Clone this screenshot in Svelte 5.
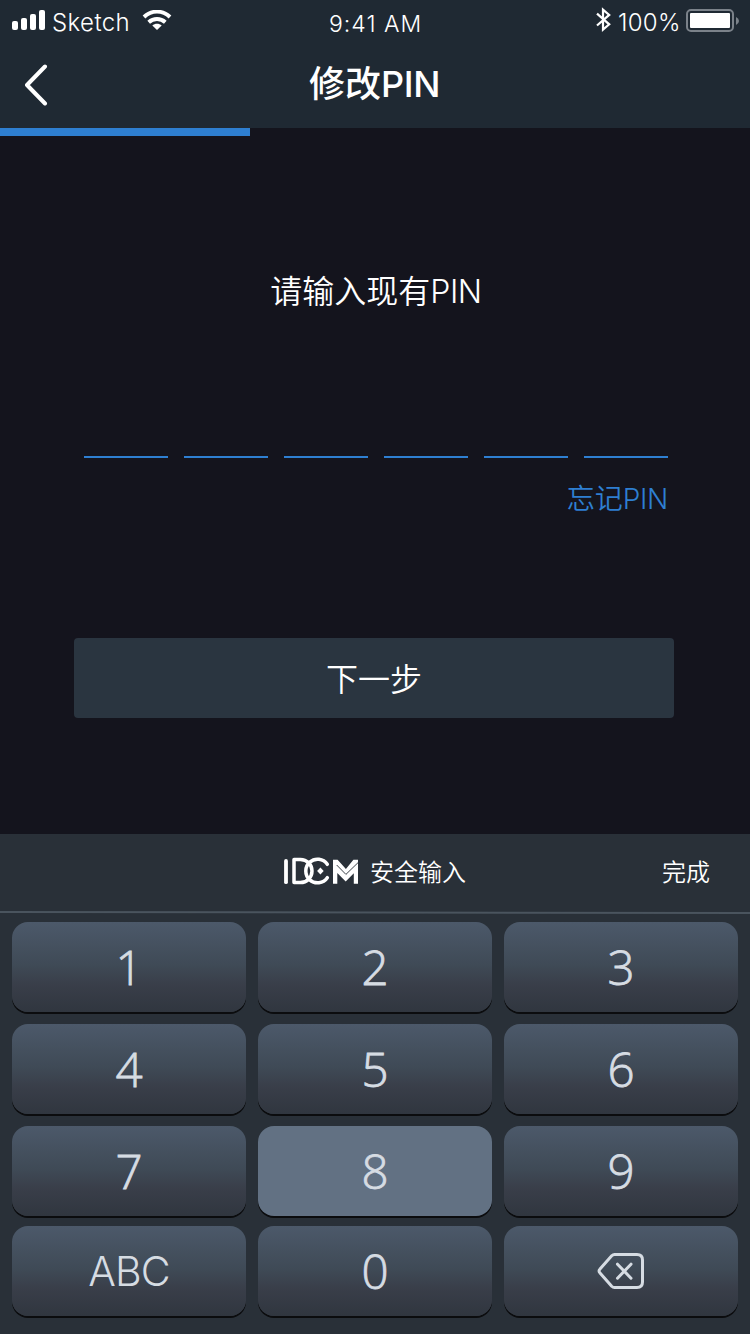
<script>
  const slots = [0, 1, 2, 3, 4, 5];
  const keys = ['1', '2', '3', '4', '5', '6', '7', '8', '9', 'ABC', '0', 'delete'];
</script>

<main class="screen">
  <header>
    <div class="status">
      <svg class="signal" width="34" height="22" viewBox="0 0 34 22" fill="#fff">
        <rect x="0" y="11" width="6" height="9" rx="2" />
        <rect x="9" y="8" width="6" height="12" rx="2" />
        <rect x="18" y="4" width="6" height="16" rx="2" />
        <rect x="27" y="0" width="6" height="20" rx="2" />
      </svg>
      <span class="carrier">Sketch</span>
      <svg class="wifi" width="30" height="22" viewBox="0 0 30 22">
        <g fill="none" stroke="#fff">
          <path d="M2 7C9.500-.2 20.500-.2 28 7" stroke-width="3.900" />
          <path d="M6.700 12.200c4.700-4.300 11.900-4.300 16.600 0" stroke-width="3.900" />
        </g>
        <path d="M15 20l-4.700-4.600c2.600-2.300 6.800-2.300 9.400 0z" fill="#fff" />
      </svg>
      <span class="time">9:41 AM</span>
      <svg class="bluetooth" width="16" height="26" viewBox="0 0 16 26" fill="none" stroke="#fff" stroke-width="2.200">
        <path d="M1 6.700l12.200 10.600-6.200 5.300V2.600l6.200 5.300L1 18.500" />
      </svg>
      <span class="percent">100%</span>
      <svg class="battery" width="54" height="24" viewBox="0 0 54 24">
        <rect x="1" y="1" width="46" height="21" rx="4" fill="none" stroke="#7b828a" stroke-width="2" />
        <rect x="4" y="4" width="40" height="15" rx="1" fill="#fff" />
        <path d="M50 8v8q3-1.500 3-4t-3-4z" fill="#7b828a" />
      </svg>
    </div>
    <nav>
      <svg class="back" width="24" height="42" viewBox="0 0 24 42" fill="none" stroke="#fff" stroke-width="4" stroke-linecap="round" stroke-linejoin="round">
        <path d="M21 2.500L3 21l18 18.500" />
      </svg>
      <h1>修改<span>PIN</span></h1>
    </nav>
  </header>
  <div class="progress"></div>
  <section class="form">
    <p class="prompt">请输入现有<span>PIN</span></p>
    <div class="slots">
      {#each slots as slot (slot)}<i></i>{/each}
    </div>
    <div class="forgot">忘记<span>PIN</span></div>
    <button class="next">下一步</button>
  </section>
  <section class="keyboard">
    <div class="toolbar">
      <svg class="logo" width="76" height="30" viewBox="0 0 76 30">
        <g fill="none" stroke="#fff" stroke-width="3.500">
          <path d="M3 4.900v21.300" stroke-width="3.800" stroke-linecap="round" />
          <path d="M11 3.400h6.400c6.500 0 11.600 5.200 11.600 11.600s-5.100 11.600-11.600 11.600H11z" stroke-linejoin="round" />
          <path d="M44.300 8.300a11.800 11.800 0 1 0 0 13.400" stroke-linecap="round" />
        </g>
        <path d="M37.400 11.500l3.300 3.500-3.300 3.500-3.300-3.500z" fill="#fff" />
        <path d="M50 3.700h4.600l8.300 9.200 7.500-9.200H75v24h-4.200V17.200l-8.100 8.300-8.400-8.500v10.700H50z" fill="#fff" />
        <path d="M53.700 9l9.200 9.400L75.500 6.200" fill="none" stroke="#293038" stroke-width=".9" />
      </svg>
      <span class="safe">安全输入</span>
      <span class="done">完成</span>
    </div>
    <svg class="divider" width="750" height="4" viewBox="0 0 750 4"><path d="M0 1l750 1" stroke="#4a545e" stroke-width="2" /></svg>
    <div class="keys">
      {#each keys as key (key)}
        <button class="key" class:pressed={key === '8'} class:letters={key === 'ABC'}>
          {#if key === 'delete'}
            <svg width="48" height="38" viewBox="0 0 48 38" fill="none" stroke="#d6dce3" stroke-width="3" stroke-linecap="round" stroke-linejoin="round">
              <path d="M17.500 2.500H40q5.500 0 5.500 5.500v22q0 5.500-5.500 5.500H17.500q-1.500 0-2.800-1.300L3 21q-2-2 0-4L14.700 3.800q1.300-1.300 2.800-1.300z" />
              <path d="M20.500 12.200l13.500 14M34 12.200l-13.500 14" />
            </svg>
          {:else}<span>{key}</span>{/if}
        </button>
      {/each}
    </div>
  </section>
</main>

<style>
  :global(body) { margin: 0; background: #14141d; }
  * { box-sizing: border-box; }
  .screen { width: 750px; height: 1334px; display: flex; flex-direction: column; overflow: hidden; background: #14141d; color: #fff; font-family: Inter, "Noto Sans CJK SC", sans-serif; }
  header { height: 128px; background: #1f2933; flex: none; }
  .status { height: 44px; display: flex; align-items: flex-start; padding-left: 12px; font-size: 24px; font-weight: 350; line-height: 28px; white-space: nowrap; }
  .status svg { flex: none; }
  .signal { margin-top: 10px; }
  .carrier { width: 78px; margin: 9px 0 0 6px; letter-spacing: .4px; }
  .wifi { margin: 10px 0 0 12px; }
  .time { width: 94px; margin: 10px 0 0 157px; font-size: 23px; letter-spacing: 1px; }
  .bluetooth { margin: 7px 0 0 173px; }
  .percent { width: 62px; margin: 9px 0 0 6px; font-size: 24px; letter-spacing: .3px; }
  .battery { margin: 9px 0 0 6px; }
  nav { height: 84px; display: flex; align-items: flex-start; padding-left: 24px; }
  .back { flex: none; margin-top: 20px; }
  h1 { margin: 15px 0 0 261px; font-size: 36px; line-height: 50px; font-weight: 500; white-space: nowrap; }
  h1 span { font-weight: 450; letter-spacing: -.3px; }
  .progress { width: 250px; height: 8px; background: #2e7fd1; flex: none; }
  .form { height: 698px; flex: none; padding: 132px 76px 0 74px; display: flex; flex-direction: column; }
  .prompt { margin: 0; padding-left: 4px; height: 44px; line-height: 48px; font-size: 32px; font-weight: 350; text-align: center; }
  .prompt span { font-weight: 300; letter-spacing: -.5px; }
  .slots { display: flex; gap: 16px; padding-left: 10px; margin-top: 144px; }
  .slots i { width: 84px; height: 2px; background: #2e7fd1; }
  .forgot { align-self: flex-end; margin: 21px 6px 0 0; height: 40px; line-height: 40px; font-size: 28px; font-weight: 350; color: #2e7fd1; }
  .forgot span { font-weight: 300; letter-spacing: -.3px; }
  .next { margin: 119px 0 0; width: 600px; height: 80px; border: 0; border-radius: 4px; background: #2a3540; color: #fff; font: 350 32px/80px Inter, "Noto Sans CJK SC", sans-serif; padding: 2px 0 0; }
  .keyboard { height: 500px; background: #293038; flex: none; }
  .toolbar { height: 77px; display: flex; align-items: flex-start; padding-left: 283px; font-size: 24px; font-weight: 350; line-height: 36px; }
  .logo { flex: none; margin-top: 22px; }
  .safe { margin: 21px 0 0 11px; }
  .done { margin: 21px 0 0 196px; }
  .divider { display: block; }
  .keys { display: grid; grid-template-columns: repeat(3, 234px); grid-template-rows: 102px 102px 100px 92px; column-gap: 12px; padding: 7px 12px 0; }
  .key { display: flex; align-items: center; justify-content: center; width: 234px; height: 90px; padding: 0; border: 0; border-radius: 16px; background: linear-gradient(#4c596a, #3f4a56 48%, #393e49 70%, #30363f); box-shadow: 0 2px 0 #0b0c0e; color: #d6dce3; font: 300 47.500px/90px "Open Sans", sans-serif; -webkit-text-stroke: .8px #d6dce3; }
  .pressed { background: #627183; }
  .letters { font-family: Inter, sans-serif; font-size: 41px; letter-spacing: -.8px; -webkit-text-stroke: 0; }
</style>
